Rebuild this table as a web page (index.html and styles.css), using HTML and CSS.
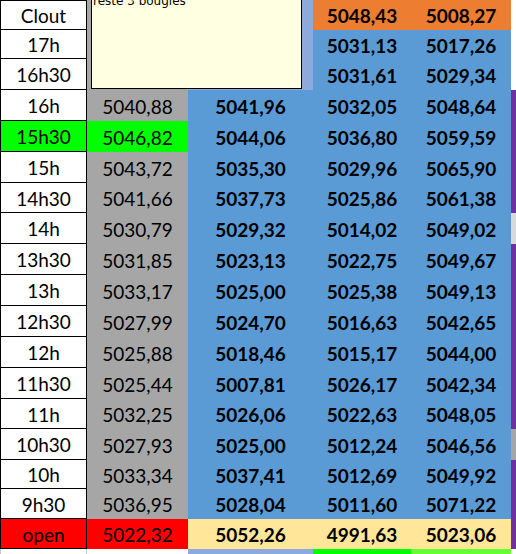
FILE: index.html
```html
<!DOCTYPE html>
<html>
<head>
<meta charset="utf-8">
<link rel="stylesheet" href="styles.css">
</head>
<body>
<div class="sheet">
  <div class="row h30 first"><div class="c a">Clout</div><div class="c b"></div><div class="c v lb"></div><div class="c v or">5048,43</div><div class="c v or">5008,27</div><div class="c f w"></div></div>
  <div class="row h29"><div class="c a">17h</div><div class="c b"></div><div class="c v lb"></div><div class="c v bl">5031,13</div><div class="c v bl">5017,26</div><div class="c f w"></div></div>
  <div class="row h31"><div class="c a">16h30</div><div class="c b"></div><div class="c v lb"></div><div class="c v bl">5031,61</div><div class="c v bl">5029,34</div><div class="c f w"></div></div>
  <div class="row h31"><div class="c a">16h</div><div class="c b">5040,88</div><div class="c v bl">5041,96</div><div class="c v bl">5032,05</div><div class="c v bl">5048,64</div><div class="c f"></div></div>
  <div class="row h31"><div class="c a green">15h30</div><div class="c b green">5046,82</div><div class="c v bl">5044,06</div><div class="c v bl">5036,80</div><div class="c v bl">5059,59</div><div class="c f"></div></div>
  <div class="row h31"><div class="c a">15h</div><div class="c b">5043,72</div><div class="c v bl">5035,30</div><div class="c v bl">5029,96</div><div class="c v bl">5065,90</div><div class="c f"></div></div>
  <div class="row h30"><div class="c a">14h30</div><div class="c b">5041,66</div><div class="c v bl">5037,73</div><div class="c v bl">5025,86</div><div class="c v bl">5061,38</div><div class="c f"></div></div>
  <div class="row h31"><div class="c a">14h</div><div class="c b">5030,79</div><div class="c v bl">5029,32</div><div class="c v bl">5014,02</div><div class="c v bl">5049,02</div><div class="c f lg"></div></div>
  <div class="row h31"><div class="c a">13h30</div><div class="c b">5031,85</div><div class="c v bl">5023,13</div><div class="c v bl">5022,75</div><div class="c v bl">5049,67</div><div class="c f"></div></div>
  <div class="row h31"><div class="c a">13h</div><div class="c b">5033,17</div><div class="c v bl">5025,00</div><div class="c v bl">5025,38</div><div class="c v bl">5049,13</div><div class="c f"></div></div>
  <div class="row h31"><div class="c a">12h30</div><div class="c b">5027,99</div><div class="c v bl">5024,70</div><div class="c v bl">5016,63</div><div class="c v bl">5042,65</div><div class="c f"></div></div>
  <div class="row h31"><div class="c a">12h</div><div class="c b">5025,88</div><div class="c v bl">5018,46</div><div class="c v bl">5015,17</div><div class="c v bl">5044,00</div><div class="c f"></div></div>
  <div class="row h31"><div class="c a">11h30</div><div class="c b">5025,44</div><div class="c v bl">5007,81</div><div class="c v bl">5026,17</div><div class="c v bl">5042,34</div><div class="c f"></div></div>
  <div class="row h30"><div class="c a">11h</div><div class="c b">5032,25</div><div class="c v bl">5026,06</div><div class="c v bl">5022,63</div><div class="c v bl">5048,05</div><div class="c f"></div></div>
  <div class="row h31"><div class="c a">10h30</div><div class="c b">5027,93</div><div class="c v bl">5025,00</div><div class="c v bl">5012,24</div><div class="c v bl">5046,56</div><div class="c f gr"></div></div>
  <div class="row h29"><div class="c a">10h</div><div class="c b">5033,34</div><div class="c v bl">5037,41</div><div class="c v bl">5012,69</div><div class="c v bl">5049,92</div><div class="c f"></div></div>
  <div class="row h30"><div class="c a">9h30</div><div class="c b">5036,95</div><div class="c v bl">5028,04</div><div class="c v bl">5011,60</div><div class="c v bl">5071,22</div><div class="c f"></div></div>
  <div class="row h30"><div class="c a red">open</div><div class="c b red">5022,32</div><div class="c v ye">5052,26</div><div class="c v ye">4991,63</div><div class="c v ye">5023,06</div><div class="c f"></div></div>
  <div class="row tail"><div class="c a blank"></div><div class="c b w"></div><div class="c lb"></div><div class="c g1"></div><div class="c g2"></div><div class="c f w"></div></div>
  <div class="note">reste 3 bougies</div>
</div>
</body>
</html>
```
FILE: styles.css
```css
html, body {
  margin: 0;
  padding: 0;
  background: #ffffff;
}
.sheet {
  position: relative;
  width: 516px;
  height: 554px;
  overflow: hidden;
  display: flex;
  flex-direction: column;
  font-family: "Lato", "Open Sans", sans-serif;
  font-size: 19px;
  color: #000;
}
.row {
  display: grid;
  grid-template-columns: 87px 101px 125px 98px 100px 5px;
  flex: none;
}
.h29 { height: 29px; }
.h30 { height: 30px; }
.h31 { height: 31px; }
.tail { flex: 1; }
.c {
  box-sizing: border-box;
  display: flex;
  align-items: center;
  justify-content: center;
  padding-top: 1px;
  white-space: nowrap;
}
.a {
  background: #ffffff;
  border-left: 1px solid #000;
  border-right: 1px solid #000;
  border-bottom: 1px solid #000;
}
.first .a { border-top: 1px solid #000; }
.a.blank {
  border-bottom: none;
  border-left-color: #c8c8c8;
  border-right-color: #c8c8c8;
}
.b { background: #a6a6a6; }
.v { font-weight: 700; }
.lb { background: #8ea9db; }
.bl { background: #5b9bd5; }
.or { background: #ed7d31; }
.ye { background: #ffe699; }
.green { background: #00ff00; }
.red { background: #ff0000; }
.g1 { background: #00ff00; }
.g2 { background: #66ff33; }
.f { background: #7030a0; }
.f.w, .b.w { background: #ffffff; }
.f.lg { background: #d9d9d9; }
.f.gr { background: #a6a6a6; }
.note {
  position: absolute;
  left: 91px;
  top: -20px;
  width: 211px;
  height: 109px;
  box-sizing: border-box;
  border: 1px solid #000;
  background: #ffffe1;
  padding: 13px 2px 0 1px;
  font-family: "DejaVu Sans", sans-serif;
  font-size: 12px;
  line-height: 14px;
  font-weight: 400;
}
```
